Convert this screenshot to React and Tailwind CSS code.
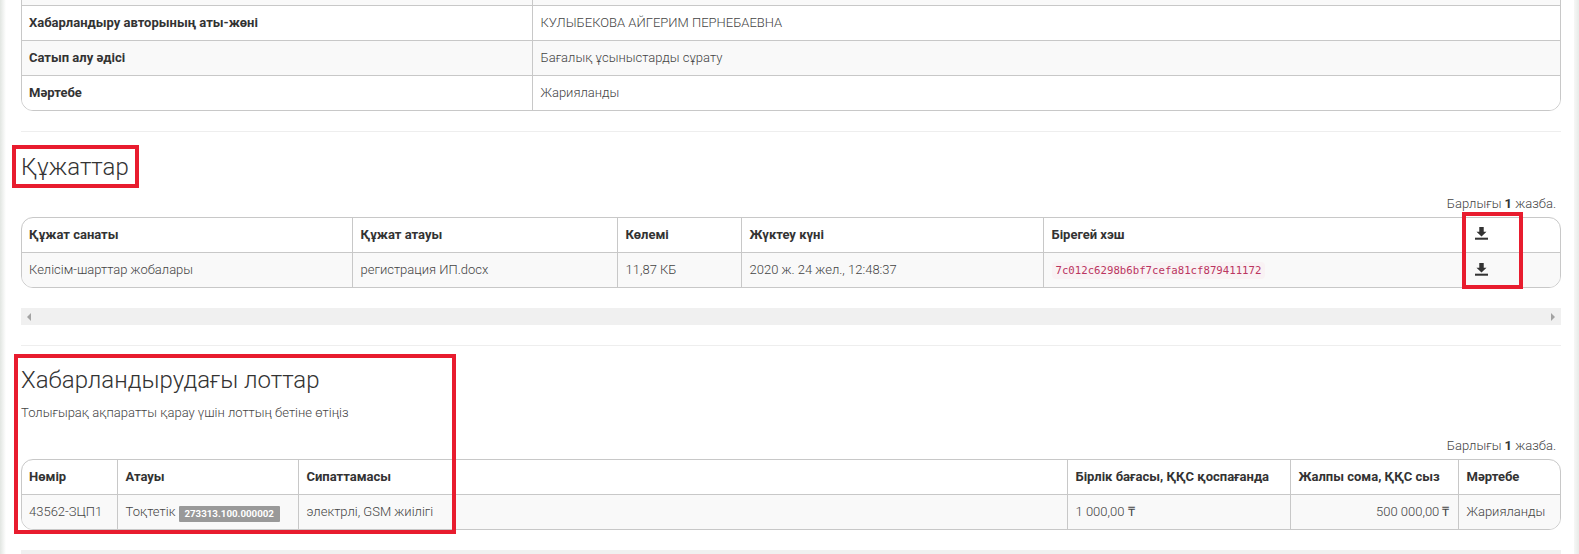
const ff = { fontFamily: "Roboto, sans-serif" };

function DownloadIcon() {
  return (
    <svg width="13" height="13" viewBox="0 0 14 14" className="block" fill="#333">
      <path d="M4.6 0h4.8v5h3L7 10.2 1.6 5h3z" />
      <rect x="0" y="11.5" width="14" height="2.2" />
    </svg>
  );
}

function Frame({ children }) {
  return (
    <div className="border border-[#c8c8c8] rounded-[12px] overflow-hidden">
      <table className="w-full table-fixed border-collapse text-[13px] font-light text-[#444]">{children}</table>
    </div>
  );
}

const th = "h-[34px] pl-2 first:pl-[7px] pr-2 py-0 text-left font-bold text-[#333] align-middle border-b border-r border-[#c8c8c8] last:border-r-0";
const td = "h-[35px] pl-2 first:pl-[7px] pr-2 py-0 text-left font-light align-middle border-r border-[#c8c8c8] last:border-r-0 bg-[#f9f9f9]";

function Total() {
  return (
    <p className="text-right text-[13px] font-light text-[#444] h-[17px] leading-[17px] pr-[5px]">
      Барлығы <b className="font-bold text-[#333]">1</b> жазба.
    </p>
  );
}

function ScrollTrack({ arrows }) {
  return (
    <div className="h-[17px] bg-[#f0f0f0] flex items-center justify-between px-[6px]">
      {arrows && (
        <>
          <span className="w-0 h-0 border-y-[4px] border-y-transparent border-r-[4px] border-r-[#a3a3a3]" />
          <span className="w-0 h-0 border-y-[4px] border-y-transparent border-l-[4px] border-l-[#a3a3a3]" />
        </>
      )}
    </div>
  );
}

export default function App() {
  return (
    <div style={ff} className="relative h-[554px] overflow-hidden bg-white pl-[21px] pr-[18px]">
      <div className="absolute left-0 top-0 bottom-0 w-[6px] bg-gradient-to-r from-[#e2e6e2] to-white" />
      <div className="absolute right-0 top-0 bottom-0 w-[5px] bg-gradient-to-l from-[#e8ebe8] to-[#f6f7f6]" />

      <div className="-mt-[31px] border border-[#c8c8c8] rounded-[12px] overflow-hidden">
        <table className="w-full table-fixed border-collapse text-[13px] text-[#444]">
          <colgroup><col className="w-[510px]" /><col /></colgroup>
          <tbody>
            {[
              ["", "", "bg-[#f9f9f9]"],
              ["Хабарландыру авторының аты-жөні", "КУЛЫБЕКОВА АЙГЕРИМ ПЕРНЕБАЕВНА", "bg-white"],
              ["Сатып алу әдісі", "Бағалық ұсыныстарды сұрату", "bg-[#f9f9f9]"],
              ["Мәртебе", "Жарияланды", "bg-white"],
            ].map(([a, b, bg], i) => (
              <tr key={i} className={bg}>
                <td className={`h-[35px] pl-[7px] pr-2 py-0 font-bold text-[#333] border-r border-[#c8c8c8] ${i < 3 ? "border-b" : ""}`}>{a}</td>
                <td className={`h-[35px] px-2 py-0 font-light ${i < 3 ? "border-b border-[#c8c8c8]" : ""}`}>{b}</td>
              </tr>
            ))}
          </tbody>
        </table>
      </div>

      <hr className="mt-[20px] border-t border-[#eeeeee]" />
      <h3 className="mt-[20px] h-[30px] leading-[30px] text-[24px] font-light text-[#333]">Құжаттар</h3>
      <div className="mt-[13px]"><Total /></div>
      <div className="mt-[5px]">
        <Frame>
          <colgroup>
            <col className="w-[330px]" /><col className="w-[265px]" /><col className="w-[124px]" />
            <col className="w-[302px]" /><col className="w-[421px]" /><col />
          </colgroup>
          <thead>
            <tr>
              <th className={th}>Құжат санаты</th>
              <th className={th}>Құжат атауы</th>
              <th className={th}>Көлемі</th>
              <th className={th}>Жүктеу күні</th>
              <th className={th}>Бірегей хэш</th>
              <th className={th}><span className="block ml-[2px] mb-[2px]"><DownloadIcon /></span></th>
            </tr>
          </thead>
          <tbody>
            <tr>
              <td className={td}>Келісім-шарттар жобалары</td>
              <td className={td}>регистрация ИП.docx</td>
              <td className={td}>11,87 КБ</td>
              <td className={td}>2020 ж. 24 жел., 12:48:37</td>
              <td className={td}>
                <code className="font-['DejaVu_Sans_Mono',monospace] text-[10.7px] font-normal text-[#bb3560] bg-[#f9f2f4] px-[4px] py-[2px] rounded-[4px]">7c012c6298b6bf7cefa81cf879411172</code>
              </td>
              <td className={td}><span className="block ml-[2px]"><DownloadIcon /></span></td>
            </tr>
          </tbody>
        </Frame>
      </div>
      <div className="mt-[20px]"><ScrollTrack arrows /></div>

      <hr className="mt-[20px] border-t border-[#eeeeee]" />
      <h3 className="mt-[19px] h-[30px] leading-[30px] text-[24px] font-light text-[#333]">Хабарландырудағы лоттар</h3>
      <p className="mt-[9px] h-[17px] leading-[17px] text-[13px] font-light text-[#444]">Толығырақ ақпаратты қарау үшін лоттың бетіне өтіңіз</p>
      <div className="mt-[16px]"><Total /></div>
      <div className="mt-[5px]">
        <Frame>
          <colgroup>
            <col className="w-[95px]" /><col className="w-[181px]" /><col className="w-[769px]" />
            <col className="w-[223px]" /><col className="w-[168px]" /><col />
          </colgroup>
          <thead>
            <tr>
              <th className={th}>Нөмір</th>
              <th className={th}>Атауы</th>
              <th className={th}>Сипаттамасы</th>
              <th className={th}>Бірлік бағасы, ҚҚС қоспағанда</th>
              <th className={th}>Жалпы сома, ҚҚС сыз</th>
              <th className={th}>Мәртебе</th>
            </tr>
          </thead>
          <tbody>
            <tr>
              <td className={td}>43562-ЗЦП1</td>
              <td className={td}>
                Тоқтетік{" "}
                <span className="inline-block px-[5.85px] h-[16px] leading-[16px] bg-[#999999] text-white text-[9.75px] font-bold rounded-[1px] align-[-1px]">273313.100.000002</span>
              </td>
              <td className={td}>электрлі, GSM жиілігі</td>
              <td className={td}>1 000,00 ₸</td>
              <td className={`${td} text-right`}>500 000,00 ₸</td>
              <td className={td}>Жарияланды</td>
            </tr>
          </tbody>
        </Frame>
      </div>
      <div className="mt-[20px]"><ScrollTrack /></div>

      <div className="absolute left-[12px] top-[145px] w-[127px] h-[43px] border-[4px] border-[#e81c2e]" />
      <div className="absolute left-[1462px] top-[212px] w-[61px] h-[77px] border-[4px] border-[#e81c2e]" />
      <div className="absolute left-[14px] top-[354px] w-[442px] h-[180px] border-[4px] border-[#e81c2e]" />
    </div>
  );
}
